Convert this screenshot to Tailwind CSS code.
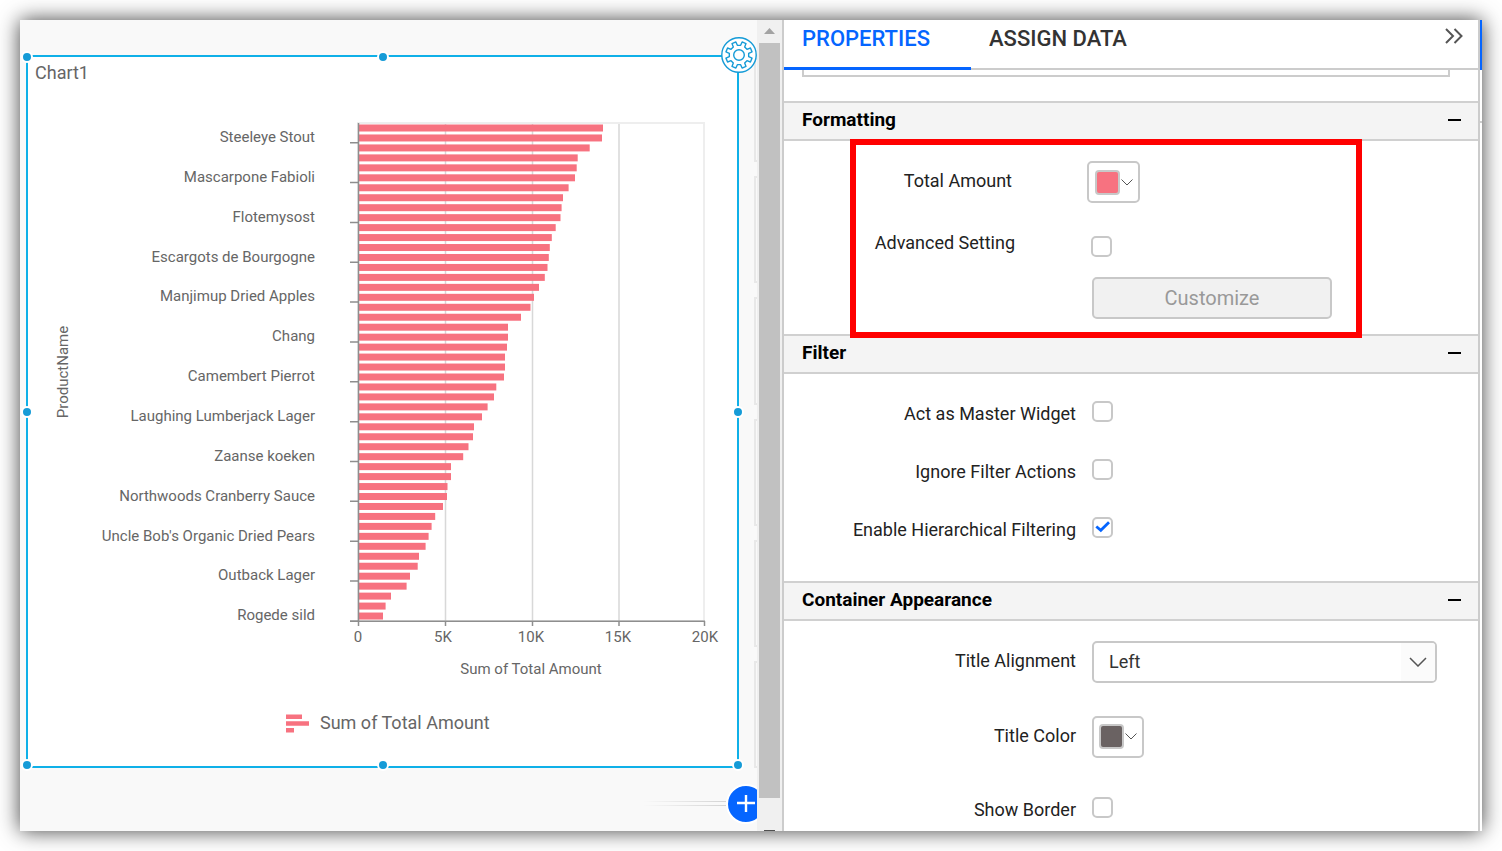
<!DOCTYPE html>
<html lang="en">
<head>
<meta charset="utf-8">
<title>Chart properties</title>
<script src="https://cdn.jsdelivr.net/npm/@tailwindcss/browser@4"></script>
</head>
<body class="bg-white font-[Roboto,sans-serif] text-[#222]">
<div class="h-screen p-5">
<div class="flex h-full overflow-visible bg-white shadow-[0_0_20px_rgba(0,0,0,0.75)]">

  <!-- Design canvas -->
  <main class="flex min-w-0 flex-[737] flex-col overflow-hidden bg-[#f9f9f9] pt-[35px]">
    <div class="flex min-h-0 flex-1 pl-[6px]">
      <section class="relative flex min-w-0 flex-1 flex-col border-2 border-[#0fb0e8] bg-white" aria-label="Chart1">
        <h2 class="px-[7px] text-lg leading-8 text-[#666]">Chart1</h2>
        <svg id="chart" class="min-h-0 w-full flex-1" viewBox="28 89 709 677" font-family="Roboto, sans-serif" font-size="15" fill="#666" role="img" aria-label="Sum of Total Amount by ProductName">
          <rect x="358" y="123" width="346" height="498" fill="none" stroke="#eee" stroke-width="2"/>
          <path d="M445.5 124V621M532.5 124V621M619 124V621" stroke="#d8d8d8" stroke-width="1.5"/>
          <g id="bars" fill="#f77280"></g>
          <path id="axis" fill="none" stroke="#8e8e8e" stroke-width="1.5" d="M358.5 123V621.3M350 621.3H705M358.5 621V626M445.5 621V626M532.5 621V626M619 621V626M704.5 621V626"/>
          <g id="names" text-anchor="end"></g>
          <g text-anchor="middle">
            <text x="358" y="642">0</text><text x="443" y="642">5K</text><text x="531" y="642">10K</text><text x="618" y="642">15K</text><text x="705" y="642">20K</text>
            <text x="531" y="674">Sum of Total Amount</text>
            <text transform="translate(68 372) rotate(-90)">ProductName</text>
          </g>
          <path fill="#f77280" d="M286 714.5h16v4.5h-16zM286 721.2h23v4.5h-23zM286 728h8v4.5h-8z"/>
          <text x="320" y="729" font-size="18">Sum of Total Amount</text>
        </svg>
        <!-- Resize handles -->
        <i class="absolute -top-[6px] -left-[7px] size-3 rounded-full border-2 border-white bg-[#159bd7]"></i>
        <i class="absolute -top-[6px] left-1/2 size-3 -translate-x-1/2 rounded-full border-2 border-white bg-[#159bd7]"></i>
        <i class="absolute top-1/2 -left-[7px] size-3 -translate-y-1/2 rounded-full border-2 border-white bg-[#159bd7]"></i>
        <i class="absolute top-1/2 -right-[7px] size-3 -translate-y-1/2 rounded-full border-2 border-white bg-[#159bd7]"></i>
        <i class="absolute -bottom-[5px] -left-[7px] size-3 rounded-full border-2 border-white bg-[#159bd7]"></i>
        <i class="absolute -bottom-[5px] left-1/2 size-3 -translate-x-1/2 rounded-full border-2 border-white bg-[#159bd7]"></i>
        <i class="absolute -right-[7px] -bottom-[5px] size-3 rounded-full border-2 border-white bg-[#159bd7]"></i>
        <button class="absolute -top-5 -right-5 z-10 size-9" aria-label="Widget settings">
          <svg viewBox="-18 -18 36 36" fill="none" stroke="#159bd7" stroke-width="1.4">
            <circle r="17.2" fill="#fff"/>
            <circle r="5.3"/>
            <path id="gear" stroke-linejoin="round"/>
          </svg>
        </button>
      </section>
      <div class="ml-[15px] flex w-[3px] flex-col gap-[14px]">
        <i class="flex-1 border-y-2 border-l-2 border-[#e8e8e8]"></i>
        <i class="flex-1 border-y-2 border-l-2 border-[#e8e8e8]"></i>
        <i class="flex-1 border-y-2 border-l-2 border-[#e8e8e8]"></i>
        <i class="flex-1 border-y-2 border-l-2 border-[#e8e8e8]"></i>
        <i class="flex-1 border-y-2 border-l-2 border-[#e8e8e8]"></i>
        <i class="flex-1 border-y-2 border-l-2 border-[#e8e8e8]"></i>
      </div>
    </div>
    <div class="-mr-[9px] flex h-[63px] items-center justify-end pt-2">
      <div class="flex h-[5px] w-[83px] flex-col justify-between">
        <i class="h-px bg-linear-to-r from-[#f9f9f9] to-[#d4d4d4]"></i>
        <i class="h-px bg-linear-to-r from-[#f9f9f9] to-[#d4d4d4]"></i>
      </div>
      <button class="flex size-10 items-center justify-center rounded-full border-2 border-white bg-[#0565ff]" aria-label="Add row">
        <svg class="size-[18px]" viewBox="0 0 18 18" stroke="#fff" stroke-width="2.4"><path d="M0 8H18M9 -1V17"/></svg>
      </button>
    </div>
  </main>

  <!-- Canvas scrollbar -->
  <div class="flex w-[25px] flex-col bg-[#f0f0f0]">
    <svg class="h-[23px] w-full" viewBox="0 0 25 23"><path d="M7 14L12.500 8L18 14Z" fill="#a3a3a3"/></svg>
    <div class="mr-[2px] ml-[2px] flex-1 bg-[#c1c1c1]"></div>
    <svg class="h-[33px] w-full" viewBox="0 0 25 33"><path d="M7 32H18V33H7Z" fill="#505050"/></svg>
  </div>

  <!-- Properties panel -->
  <aside class="flex min-w-0 flex-[694] flex-col overflow-hidden border-x-2 border-[#ccc]">
    <div class="flex h-[50px] shrink-0 items-stretch border-b-2 border-[#ccc]" role="tablist">
      <button role="tab" aria-selected="true" class="-mb-[2px] w-[187px] border-b-3 border-[#0565ff] pb-[10px] pl-[18px] text-left text-[22px] leading-6 font-medium text-[#0565ff]">PROPERTIES</button>
      <button role="tab" aria-selected="false" class="pb-[10px] pl-[18px] text-left text-[22px] leading-6 font-medium text-[#333]">ASSIGN DATA</button>
      <button class="mr-[15px] mb-4 ml-auto self-center" aria-label="Collapse panel">
        <svg class="h-4 w-[18px]" viewBox="0 0 18 16" fill="none" stroke="#555" stroke-width="2"><path d="M1 1L8 8L1 15M9.500 1L16.500 8L9.500 15"/></svg>
      </button>
    </div>
    <div class="mr-7 ml-[18px] h-[7px] shrink-0 border-x-2 border-b-2 border-[#ccc]"></div>

    <section class="relative mt-6 shrink-0">
      <header class="flex h-10 items-center justify-between border-y-2 border-[#d0d0d0] bg-[#f4f4f4] pr-[17px] pb-[2px] pl-[18px]">
        <h3 class="text-[19px] leading-6 font-bold text-black">Formatting</h3>
        <button class="w-[13px]" aria-label="Collapse Formatting"><span class="block h-[2px] bg-black"></span></button>
      </header>
      <div class="pt-5 pb-[15px]">
        <div class="flex items-center gap-[75px]">
          <label for="amount" class="w-[228px] pb-[2px] text-right text-lg leading-6">Total Amount</label>
          <button id="amount" class="flex h-[42px] w-[53px] items-center gap-px rounded-[5px] border-2 border-[#c8c8c8] pl-[6px]">
            <span class="size-[25px] rounded-[4px] border-2 border-[#c8c8c8] bg-[#f77280]"></span>
            <svg class="h-[7px] w-3" viewBox="0 0 12 7" fill="none" stroke="#555"><path d="M.5 .5L6 6L11.500 .5"/></svg>
          </button>
        </div>
        <div class="mt-[22px] flex h-[42px] items-center gap-[76px]">
          <label for="advanced" class="w-[231px] pb-[6px] text-right text-lg leading-6">Advanced Setting</label>
          <input id="advanced" type="checkbox" class="size-[21px] appearance-none rounded-[5px] border-2 border-[#c8c8c8] bg-white">
        </div>
        <button disabled class="mt-[10px] ml-[308px] h-[42px] w-60 rounded-[5px] border-2 border-[#c8c8c8] bg-[#f1f1f1] text-[20px] leading-6 text-[#999]">Customize</button>
      </div>
      <!-- Highlight around the formatting options -->
      <div class="pointer-events-none absolute top-[38px] -bottom-1 left-[66px] w-[512px] border-6 border-[#f00]"></div>
    </section>

    <section class="shrink-0">
      <header class="flex h-10 items-center justify-between border-y-2 border-[#d0d0d0] bg-[#f4f4f4] pr-[17px] pb-[2px] pl-[18px]">
        <h3 class="text-[19px] leading-6 font-bold text-black">Filter</h3>
        <button class="w-[13px]" aria-label="Collapse Filter"><span class="block h-[2px] bg-black"></span></button>
      </header>
      <div class="pt-2 pb-[25px]">
        <div class="flex h-[58px] items-center gap-4">
          <label for="master" class="w-[292px] pt-[6px] text-right text-lg leading-6">Act as Master Widget</label>
          <input id="master" type="checkbox" class="size-[21px] appearance-none rounded-[5px] border-2 border-[#c8c8c8] bg-white">
        </div>
        <div class="flex h-[58px] items-center gap-4">
          <label for="ignore" class="w-[292px] pt-[6px] text-right text-lg leading-6">Ignore Filter Actions</label>
          <input id="ignore" type="checkbox" class="size-[21px] appearance-none rounded-[5px] border-2 border-[#c8c8c8] bg-white">
        </div>
        <div class="flex h-[58px] items-center gap-4">
          <label for="hier" class="w-[292px] pt-[6px] text-right text-lg leading-6">Enable Hierarchical Filtering</label>
          <span class="relative size-[21px]">
            <input id="hier" type="checkbox" checked class="peer block size-[21px] appearance-none rounded-[5px] border-2 border-[#c8c8c8] bg-white">
            <svg class="pointer-events-none absolute inset-0 hidden peer-checked:block" viewBox="0 0 21 21" fill="none" stroke="#0565ff" stroke-width="2.800"><path d="M4.300 9.500L8.800 13.300L17 5.300"/></svg>
          </span>
        </div>
      </div>
    </section>

    <section class="shrink-0">
      <header class="flex h-10 items-center justify-between border-y-2 border-[#d0d0d0] bg-[#f4f4f4] pr-[17px] pb-[2px] pl-[18px]">
        <h3 class="text-[19px] leading-6 font-bold text-black">Container Appearance</h3>
        <button class="w-[13px]" aria-label="Collapse Container Appearance"><span class="block h-[2px] bg-black"></span></button>
      </header>
      <div class="pt-[3px]">
        <div class="flex h-[75px] items-center gap-4">
          <label for="align" class="w-[292px] pb-[2px] text-right text-lg leading-6">Title Alignment</label>
          <div class="relative mr-[41px] flex-1">
            <select id="align" class="block h-[42px] w-full appearance-none rounded-[5px] border-2 border-[#c8c8c8] bg-white px-[15px] text-lg leading-6 text-[#333]"><option>Left</option></select>
            <span class="pointer-events-none absolute inset-y-[2px] right-[2px] flex w-[34px] items-center justify-center rounded-r-[3px] bg-[#fbfbfb]">
              <svg class="h-[10px] w-[18px]" viewBox="0 0 18 10" fill="none" stroke="#555" stroke-width="1.500"><path d="M1 1L9 9L17 1"/></svg>
            </span>
          </div>
        </div>
        <div class="flex h-[75px] items-center gap-4">
          <label for="color" class="w-[292px] pb-[2px] text-right text-lg leading-6">Title Color</label>
          <button id="color" class="flex h-[42px] w-[52px] items-center gap-px rounded-[5px] border-2 border-[#c8c8c8] pl-[5px]">
            <span class="size-[25px] rounded-[4px] border-2 border-[#c8c8c8] bg-[#6a6262]"></span>
            <svg class="h-[7px] w-3" viewBox="0 0 12 7" fill="none" stroke="#555"><path d="M.5 .5L6 6L11.500 .5"/></svg>
          </button>
        </div>
        <div class="flex h-[66px] items-center gap-4">
          <label for="border" class="w-[292px] pt-[6px] text-right text-lg leading-6">Show Border</label>
          <input id="border" type="checkbox" class="size-[21px] appearance-none rounded-[5px] border-2 border-[#c8c8c8] bg-white">
        </div>
      </div>
    </section>
  </aside>
  <div class="flex w-[2px] flex-col">
    <i class="h-[50px] bg-[#0565ff]"></i>
    <i class="h-[53px] border-b-2 border-[#ccc]"></i>
  </div>
</div>
</div>
<script>
const NS = 'http://www.w3.org/2000/svg';
const ends = [603,602,589.7,577.7,576.7,575,568.6,563,561.6,560.5,555.7,551.8,549.8,548.8,547.5,544.8,539,534,530.5,521,508,508,507,505,505,504,496.3,494,487.6,482,474,473,468.5,463.2,451,451,447.5,447,443,435.2,431.6,428.6,425.6,419,417.7,410,406.6,391,385.6,383];
const bars = document.getElementById('bars');
ends.forEach((end, i) => {
  const r = document.createElementNS(NS, 'rect');
  r.setAttribute('x', 359);
  r.setAttribute('y', 124.5 + i * 9.96);
  r.setAttribute('width', end - 359);
  r.setAttribute('height', 7);
  bars.appendChild(r);
});
const names = ['Steeleye Stout','Mascarpone Fabioli','Flotemysost','Escargots de Bourgogne','Manjimup Dried Apples','Chang','Camembert Pierrot','Laughing Lumberjack Lager','Zaanse koeken','Northwoods Cranberry Sauce',"Uncle Bob's Organic Dried Pears",'Outback Lager','Rogede sild'];
const axis = document.getElementById('axis');
let ticks = axis.getAttribute('d');
names.forEach((name, i) => {
  const t = document.createElementNS(NS, 'text');
  t.setAttribute('x', 315);
  t.setAttribute('y', Math.round(142 + i * 39.85));
  t.textContent = name;
  document.getElementById('names').appendChild(t);
  ticks += `M350 ${142.7 + i * 39.85}H358`;
});
axis.setAttribute('d', ticks);
// Gear outline: each tooth is an outer segment joined to an inner one
const n = 8, pts = [];
for (let k = 0; k < n; k++) {
  const a = (k / n) * 360 + 22.5;
  for (const [d, r] of [[-13, 9.8], [-9, 13.4], [9, 13.4], [13, 9.8]]) {
    const q = (a + d) * Math.PI / 180;
    pts.push((r * Math.cos(q)).toFixed(2) + ' ' + (r * Math.sin(q)).toFixed(2));
  }
}
document.getElementById('gear').setAttribute('d', 'M' + pts.join('L') + 'Z');
</script>
</body>
</html>
